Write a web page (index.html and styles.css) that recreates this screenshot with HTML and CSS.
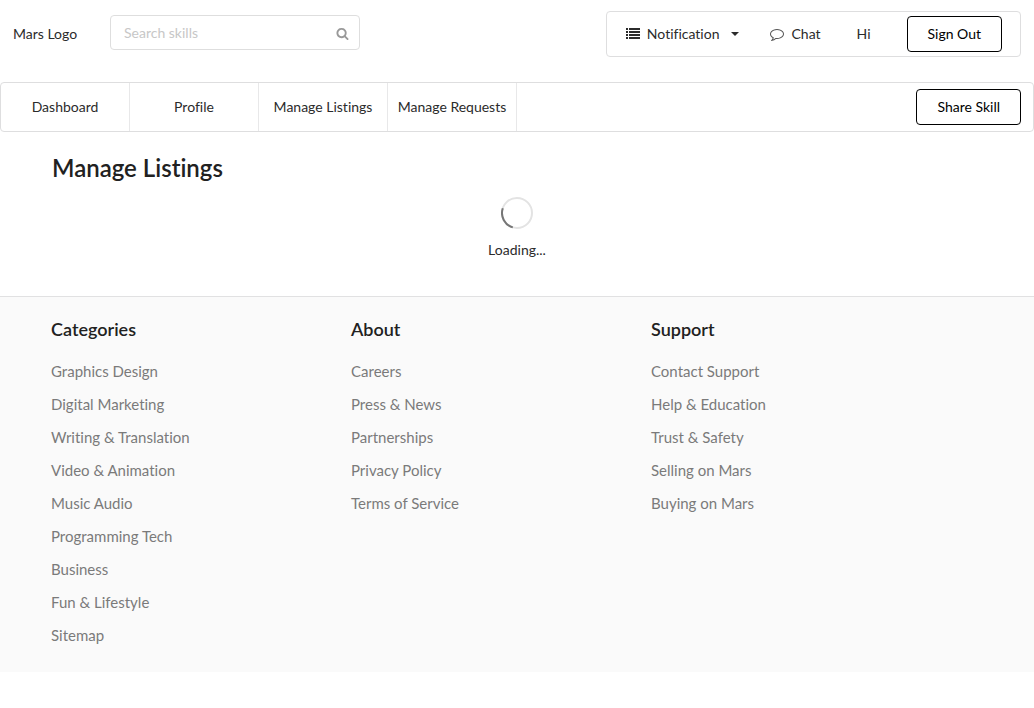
FILE: index.html
```html
<!DOCTYPE html>
<html lang="en">
<head>
<meta charset="utf-8">
<meta name="viewport" content="width=device-width, initial-scale=1">
<title>Manage Listings</title>
<link rel="stylesheet" href="styles.css">
</head>
<body>
<header class="topbar">
  <a class="logo" href="#">Mars Logo</a>
  <form class="search">
    <input class="search-input" type="text" placeholder="Search skills" aria-label="Search skills">
    <button class="search-button" type="button" aria-label="Search">
      <svg class="icon" viewBox="0 0 1792 1792" aria-hidden="true"><path d="M1216 832q0-185-131.5-316.5t-316.5-131.5-316.5 131.5-131.5 316.5 131.5 316.5 316.5 131.5 316.5-131.5 131.5-316.5zm512 832q0 52-38 90t-90 38q-54 0-90-38l-343-342q-179 124-399 124-143 0-273.5-55.5t-225-150-150-225-55.5-273.5 55.5-273.5 150-225 225-150 273.5-55.5 273.5 55.5 225 150 150 225 55.5 273.5q0 220-124 399l343 343q37 37 37 90z"/></svg>
    </button>
  </form>
  <div class="user-menu">
    <button class="menu-item notification" type="button">
      <svg class="icon" viewBox="0 0 14 14" aria-hidden="true"><path d="M0 1h2v2H0zM3 1h11v2H3zM0 4h2v2H0zM3 4h11v2H3zM0 7h2v2H0zM3 7h11v2H3zM0 10h2v2H0zM3 10h11v2H3z"/></svg>
      <span>Notification</span>
      <svg class="caret" viewBox="0 0 8 4" aria-hidden="true"><path d="M0 0h8L4 4z"/></svg>
    </button>
    <a class="menu-item chat" href="#">
      <svg class="icon" viewBox="0 0 1792 1792" aria-hidden="true"><path d="M896 384q-204 0-381.5 69.5t-282 187.5-104.5 255q0 112 71.5 213.5t201.5 175.5l87 50-27 96q-24 91-70 172 152-63 275-171l43-38 57 6q69 8 130 8 204 0 381.5-69.5t282-187.5 104.5-255-104.5-255-282-187.5-381.5-69.5zm896 512q0 174-120 321.5t-326 233-450 85.5q-70 0-145-8-198 175-460 242-49 14-114 22h-5q-15 0-27-10.5t-16-27.5v-1q-3-4-.5-12t2-10 4.5-9.5l6-9 7-8.5 8-9q7-8 31-34.5t34.5-38 31-39.5 32.5-51 27-59 26-76q-157-89-247.5-220t-90.5-281q0-174 120-321.5t326-233 450-85.5 450 85.5 326 233 120 321.5z"/></svg>
      <span>Chat</span>
    </a>
    <span class="greeting">Hi</span>
    <button class="outline-button" type="button">Sign Out</button>
  </div>
</header>
<nav class="main-nav">
  <a class="nav-item" href="#">Dashboard</a>
  <a class="nav-item" href="#">Profile</a>
  <a class="nav-item" href="#">Manage Listings</a>
  <a class="nav-item" href="#">Manage Requests</a>
  <button class="outline-button share" type="button">Share Skill</button>
</nav>
<main class="content">
  <h1 class="page-title">Manage Listings</h1>
  <div class="loader" role="status">
    <svg class="spinner" viewBox="0 0 32 32" aria-hidden="true">
      <circle class="spinner-track" cx="16" cy="16" r="15"/>
      <path class="spinner-arc" d="M1.8 11.2A15 15 0 0 0 11.8 30.4"/>
    </svg>
    <span>Loading...</span>
  </div>
</main>
<footer class="footer">
  <div class="footer-grid">
    <section class="footer-column">
      <h2 class="footer-title">Categories</h2>
      <ul class="footer-list">
        <li><a href="#">Graphics Design</a></li>
        <li><a href="#">Digital Marketing</a></li>
        <li><a href="#">Writing &amp; Translation</a></li>
        <li><a href="#">Video &amp; Animation</a></li>
        <li><a href="#">Music Audio</a></li>
        <li><a href="#">Programming Tech</a></li>
        <li><a href="#">Business</a></li>
        <li><a href="#">Fun &amp; Lifestyle</a></li>
        <li><a href="#">Sitemap</a></li>
      </ul>
    </section>
    <section class="footer-column">
      <h2 class="footer-title">About</h2>
      <ul class="footer-list">
        <li><a href="#">Careers</a></li>
        <li><a href="#">Press &amp; News</a></li>
        <li><a href="#">Partnerships</a></li>
        <li><a href="#">Privacy Policy</a></li>
        <li><a href="#">Terms of Service</a></li>
      </ul>
    </section>
    <section class="footer-column">
      <h2 class="footer-title">Support</h2>
      <ul class="footer-list">
        <li><a href="#">Contact Support</a></li>
        <li><a href="#">Help &amp; Education</a></li>
        <li><a href="#">Trust &amp; Safety</a></li>
        <li><a href="#">Selling on Mars</a></li>
        <li><a href="#">Buying on Mars</a></li>
      </ul>
    </section>
  </div>
</footer>
</body>
</html>
```

FILE: styles.css
```css
* { box-sizing: border-box; }

body {
  margin: 0;
  background: #fff;
  color: #2b2b2b;
  font: 14px/20px Lato, "Liberation Sans", sans-serif;
  font-variant-ligatures: none;
}

a { color: inherit; text-decoration: none; }

button, input { font: inherit; font-variant-ligatures: none; color: inherit; }

button { padding: 0; border: 0; background: none; cursor: pointer; }

.icon { width: 14px; height: 14px; fill: currentColor; }

.topbar {
  display: flex;
  align-items: flex-start;
  padding: 11px 13px 25px;
}

.logo { width: 97px; padding-top: 13px; }

.search {
  display: flex;
  align-items: center;
  width: 250px;
  height: 35px;
  margin-top: 4px;
  padding: 0 10px 0 13px;
  border: 1px solid #dedede;
  border-radius: 4px;
}

.search-input {
  flex: 1;
  min-width: 0;
  padding: 0;
  border: 0;
  outline: 0;
  background: none;
}

.search-input::placeholder { color: #c7c7c7; opacity: 1; }

.search-button { display: flex; padding-top: 2px; color: #999; }

.search-button .icon { width: 13px; height: 13px; }

.user-menu {
  display: flex;
  align-items: center;
  margin-left: auto;
  padding: 4px 18px 4px 19px;
  border: 1px solid #dededf;
  border-radius: 4px;
}

.menu-item { display: flex; align-items: center; gap: 7px; }

.notification { margin-right: 31px; }

.caret { width: 8px; height: 4px; margin-left: 5px; fill: currentColor; }

.chat { margin-right: 36px; }

.chat .icon { fill: #555; }

.greeting { margin-right: 36px; }

.outline-button {
  height: 36px;
  padding: 0 20px;
  border: 1px solid #000;
  border-radius: 4px;
  background: #fff;
  color: #000;
}

.main-nav {
  display: flex;
  height: 50px;
  border: 1px solid #dededf;
  border-radius: 4px;
}

.nav-item {
  display: flex;
  align-items: center;
  justify-content: center;
  width: 129px;
  border-right: 1px solid #e8e8e9;
}

.share { align-self: center; margin: 0 12px 0 auto; }

.content { padding: 20px 52px 36px; }

.page-title { margin: 0; color: #212121; font-size: 24px; line-height: 32px; font-weight: 600; }

.loader {
  display: flex;
  flex-direction: column;
  align-items: center;
  gap: 11px;
  padding-top: 13px;
}

.spinner { width: 32px; height: 32px; fill: none; stroke-width: 2; }

.spinner-track { stroke: #e3e3e3; }

.spinner-arc { stroke: #767676; }

.footer {
  padding: 20px 0;
  border-top: 1px solid #e1e1e2;
  background: #fafafa;
}

.footer-grid {
  display: grid;
  grid-template-columns: repeat(3, 300px);
  max-width: 962px;
  margin: 0 auto;
}

.footer-column { padding: 0 15px; }

.footer-title { margin: 0; color: #212121; font-size: 18px; line-height: 24px; font-weight: 600; }

.footer-list { margin: 14px 0 0; padding: 0; list-style: none; }

.footer-list li { font-size: 15px; line-height: 33px; color: #7a7a7a; }
```
